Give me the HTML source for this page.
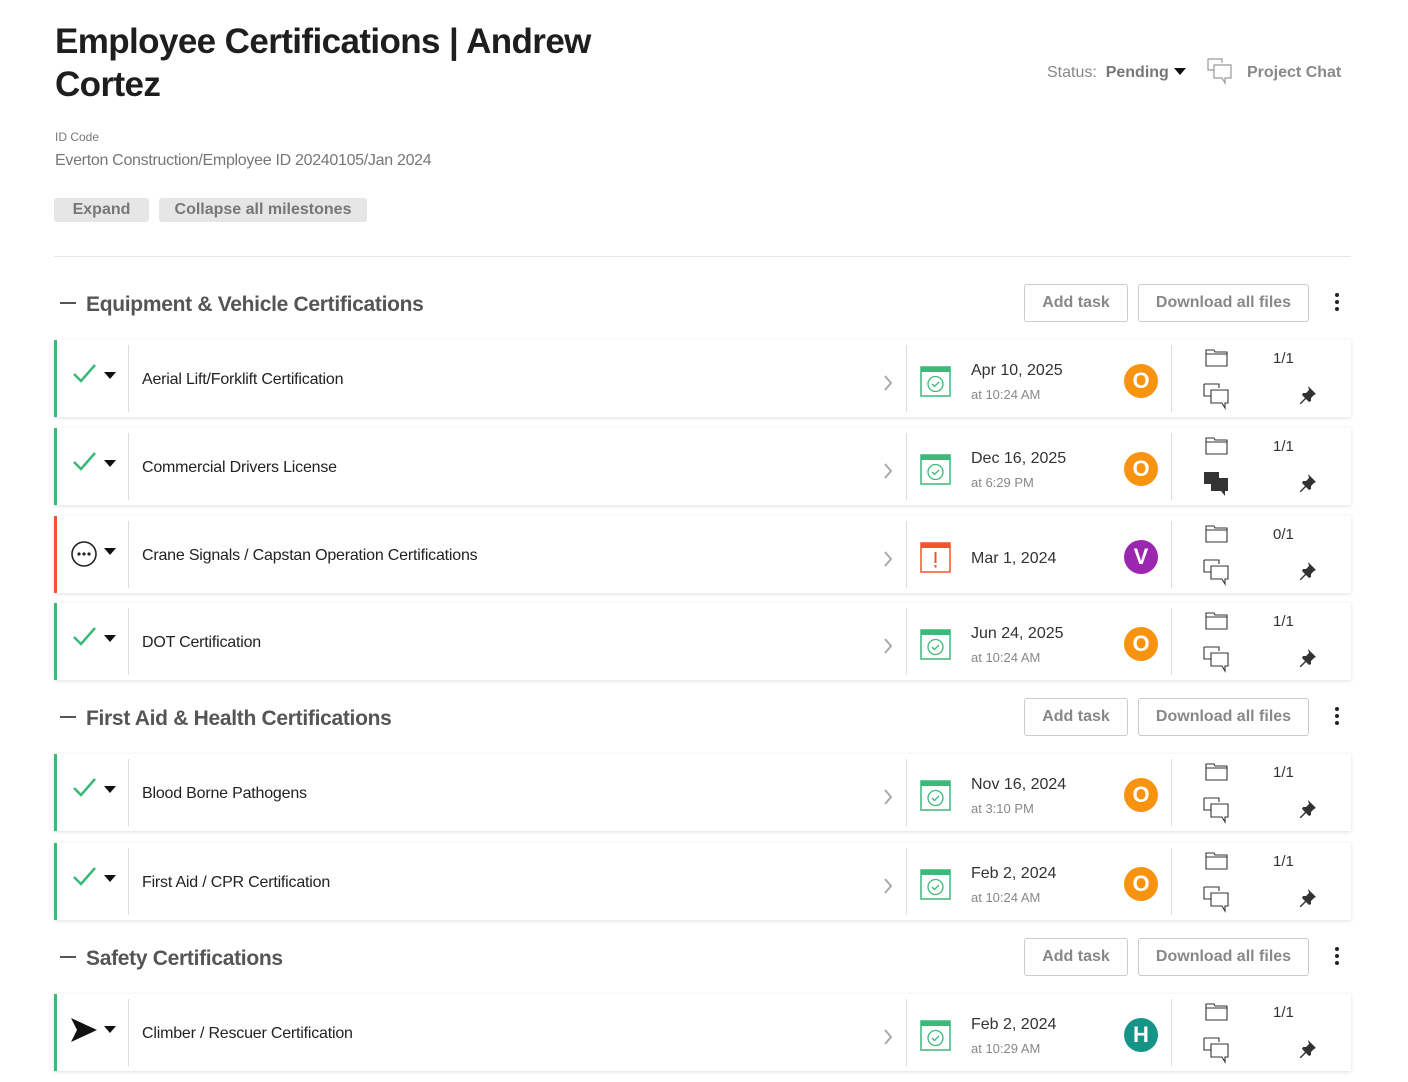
<!DOCTYPE html>
<html><head><meta charset="utf-8"><style>
*{box-sizing:border-box;margin:0;padding:0}
body{width:1408px;height:1082px;background:#fff;font-family:"Liberation Sans",sans-serif;position:relative;overflow:hidden;color:#222}
.a{position:absolute}
h1{position:absolute;left:55px;top:20px;font-size:35px;line-height:43px;font-weight:bold;color:#1e1e1e;letter-spacing:-0.6px;width:600px}
.btn{position:absolute;top:198px;height:24px;background:#e6e6e6;border-radius:3px;color:#777;font-size:16px;font-weight:bold;text-align:center;line-height:24px}
.sec{position:absolute;left:60px;font-size:21px;font-weight:bold;color:#555;letter-spacing:-0.3px}
.sec span{display:inline-block;width:16px;height:2px;background:#555;vertical-align:middle;margin-right:10px;position:relative;top:-2px}
.ob{position:absolute;height:38px;border:1px solid #ccc;border-radius:3px;color:#888;font-size:16px;font-weight:bold;text-align:center;line-height:36px;background:#fff}
.keb{position:absolute;left:1335px;width:4px}
.keb i{display:block;width:4px;height:4px;border-radius:2px;background:#222;margin-bottom:3px}
.card{position:absolute;left:54px;width:1297px;height:77px;background:#fff;box-shadow:0 1px 4px rgba(0,0,0,.13);border-left:3px solid #3cb878}
.card.red{border-left-color:#f4532f}
.card .d{position:absolute;top:5px;bottom:5px;width:1px;background:#ddd}
.t{position:absolute;left:85px;top:31px;font-size:16px;color:#222;letter-spacing:-0.2px}
.dt{position:absolute;left:914px;font-size:16px;color:#333}
.tm{position:absolute;left:914px;top:47px;font-size:13px;color:#888}
.av{position:absolute;left:1067px;top:24px;width:34px;height:34px;border-radius:17px;color:#fff;font-weight:bold;font-size:22px;text-align:center;line-height:34px}
.cnt{position:absolute;left:1216px;top:10px;font-size:15px;color:#333}
.car{position:absolute;left:47px;top:32px;width:0;height:0;border-left:6px solid transparent;border-right:6px solid transparent;border-top:7px solid #111}
</style></head><body>
<h1>Employee Certifications | Andrew Cortez</h1>
<div class="a" style="left:1047px;top:64px;font-size:16px;color:#888">Status:&nbsp; <b style="color:#777">Pending</b></div>
<div class="a" style="left:1174px;top:68px;border-left:6px solid transparent;border-right:6px solid transparent;border-top:7px solid #111"></div>
<svg class="a" style="left:1207px;top:58px" width="28" height="28" viewBox="0 0 28 28" fill="none" stroke="#999" stroke-width="1.2"><path d="M1 1h14v4M1 1v11h6"/><path d="M7 7h17v13h-6v5l-3-5H7z" fill="#fff"/></svg>
<div class="a" style="left:1247px;top:64px;font-size:16px;font-weight:bold;color:#888">Project Chat</div>
<div class="a" style="left:55px;top:130px;font-size:12px;color:#777">ID Code</div>
<div class="a" style="left:55px;top:152px;font-size:16px;color:#777;letter-spacing:-0.3px">Everton Construction/Employee ID 20240105/Jan 2024</div>
<div class="btn" style="left:54px;width:95px">Expand</div>
<div class="btn" style="left:159px;width:208px">Collapse all milestones</div>
<div class="a" style="left:54px;top:256px;width:1297px;height:1px;background:#e6e6e6"></div>

<div class="sec" style="top:293px"><span></span>Equipment &amp; Vehicle Certifications</div>
<div class="ob" style="left:1024px;top:284px;width:104px">Add task</div>
<div class="ob" style="left:1138px;top:284px;width:171px">Download all files</div>
<div class="keb" style="top:293px"><i></i><i></i><i></i></div>

<div class="sec" style="top:707px"><span></span>First Aid &amp; Health Certifications</div>
<div class="ob" style="left:1024px;top:698px;width:104px">Add task</div>
<div class="ob" style="left:1138px;top:698px;width:171px">Download all files</div>
<div class="keb" style="top:707px"><i></i><i></i><i></i></div>

<div class="sec" style="top:947px"><span></span>Safety Certifications</div>
<div class="ob" style="left:1024px;top:938px;width:104px">Add task</div>
<div class="ob" style="left:1138px;top:938px;width:171px">Download all files</div>
<div class="keb" style="top:947px"><i></i><i></i><i></i></div>

<div id="rows"></div>
<script>
var rows=[
[340,'ok','Aerial Lift/Forklift Certification','Apr 10, 2025','at 10:24 AM','O','#f7930e','1/1',0],
[428,'ok','Commercial Drivers License','Dec 16, 2025','at 6:29 PM','O','#f7930e','1/1',1],
[516,'pend','Crane Signals / Capstan Operation Certifications','Mar 1, 2024','','V','#9b27b0','0/1',0],
[603,'ok','DOT Certification','Jun 24, 2025','at 10:24 AM','O','#f7930e','1/1',0],
[754,'ok','Blood Borne Pathogens','Nov 16, 2024','at 3:10 PM','O','#f7930e','1/1',0],
[843,'ok','First Aid / CPR Certification','Feb 2, 2024','at 10:24 AM','O','#f7930e','1/1',0],
[994,'send','Climber / Rescuer Certification','Feb 2, 2024','at 10:29 AM','H','#159488','1/1',0]];
var h='';
rows.forEach(function(r){
var red=r[1]=='pend';
var st;
if(r[1]=='ok')st='<svg class="a" style="left:15px;top:22px" width="26" height="22" viewBox="0 0 26 22"><path d="M2 12l7 7L23 3" fill="none" stroke="#3cb878" stroke-width="2.5"/></svg>';
else if(r[1]=='pend')st='<svg class="a" style="left:13px;top:24px" width="28" height="28" viewBox="0 0 28 28"><circle cx="14" cy="14" r="12" fill="none" stroke="#222" stroke-width="1.6"/><circle cx="9" cy="14" r="1.6" fill="#222"/><circle cx="14" cy="14" r="1.6" fill="#222"/><circle cx="19" cy="14" r="1.6" fill="#222"/></svg>';
else st='<svg class="a" style="left:12px;top:22px" width="30" height="28" viewBox="0 0 30 28"><path d="M2 2l26 12L2 26l6-12z" fill="#111"/></svg>';
var cal=red?'<svg class="a" style="left:863px;top:26px" width="31" height="31" viewBox="0 0 31 31"><rect x="1" y="1" width="29" height="29" fill="#fff" stroke="#f4532f" stroke-width="1.5"/><rect x="1" y="1" width="29" height="5" fill="#f4532f"/><rect x="14.5" y="10" width="2" height="11" fill="#f4532f"/><rect x="14.5" y="23" width="2" height="2.5" fill="#f4532f"/></svg>'
:'<svg class="a" style="left:863px;top:26px" width="31" height="31" viewBox="0 0 31 31"><rect x="1" y="1" width="29" height="29" fill="#fff" stroke="#3cb878" stroke-width="1.5"/><rect x="1" y="1" width="29" height="5" fill="#3cb878"/><circle cx="15.5" cy="18" r="7.5" fill="none" stroke="#3cb878" stroke-width="1.3"/><path d="M12 18l2.5 2.5 4.5-4.5" fill="none" stroke="#3cb878" stroke-width="1.3"/></svg>';
var chat=r[8]?'<svg class="a" style="left:1146px;top:43px" width="28" height="28" viewBox="0 0 28 28"><path d="M1 1h15v12H1z" fill="#333"/><path d="M8 7h17v13h-3v5l-4-5H8z" fill="#333"/></svg>'
:'<svg class="a" style="left:1146px;top:43px" width="28" height="28" viewBox="0 0 28 28" fill="none" stroke="#333" stroke-width="1.1"><path d="M1 1h15v4M1 1v12h7"/><path d="M8 7h17v13h-3v5l-3-5H8z" fill="#fff"/></svg>';
h+='<div class="card'+(red?' red':'')+'" style="top:'+r[0]+'px">'+st+'<div class="car"></div><div class="d" style="left:71px"></div>'
+'<div class="t">'+r[2]+'</div>'
+'<svg class="a" style="left:826px;top:35px" width="10" height="16" viewBox="0 0 10 16"><path d="M2 1l6 7-6 7" fill="none" stroke="#aaa" stroke-width="2"/></svg>'
+'<div class="d" style="left:849px"></div>'+cal
+'<div class="dt" style="top:'+(r[4]?22:34)+'px">'+r[3]+'</div>'+(r[4]?'<div class="tm">'+r[4]+'</div>':'')
+'<div class="av" style="background:'+r[6]+'">'+r[5]+'</div>'
+'<div class="d" style="left:1114px"></div>'
+'<svg class="a" style="left:1148px;top:9px" width="23" height="18" viewBox="0 0 23 18" fill="none" stroke="#333" stroke-width="1.1"><path d="M1 1h8l1 2h12v14H1z"/><path d="M1 5h21"/></svg>'
+'<div class="cnt">'+r[7]+'</div>'+chat
+'<svg class="a" style="left:1240px;top:45px" width="20" height="20" viewBox="0 0 20 20"><path d="M11 1l8 8-2 1-3 3 0 3-2 1-3-3-5 5-1 0 0-1 5-5-3-3 1-2 3 0 3-3z" fill="#333"/></svg>'
+'</div>';
});
document.getElementById('rows').innerHTML=h;
</script>
</body></html>
